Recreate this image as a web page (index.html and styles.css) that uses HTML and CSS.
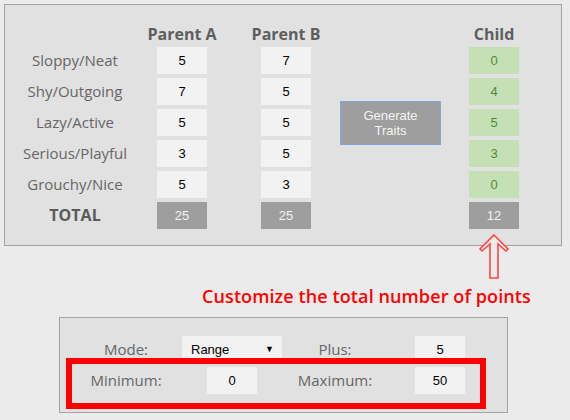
FILE: index.html
```html
<!DOCTYPE html>
<html lang="en">
<head>
    <meta charset="UTF-8">
    <meta name="viewport" content="width=device-width, initial-scale=1.0">
    <title>Trait Generator</title>
    <link rel="stylesheet" href="styles.css">
</head>
<body>
    <div class="page">
        <section class="traits">
            <div class="corner"></div>
            <div class="head col-a">Parent A</div>
            <div class="head col-b">Parent B</div>
            <div class="head col-c">Child</div>

            <div class="label">Sloppy/Neat</div>
            <div class="box col-a">5</div>
            <div class="box col-b">7</div>
            <div class="box child col-c">0</div>

            <div class="label">Shy/Outgoing</div>
            <div class="box col-a">7</div>
            <div class="box col-b">5</div>
            <div class="box child col-c">4</div>

            <div class="label">Lazy/Active</div>
            <div class="box col-a">5</div>
            <div class="box col-b">5</div>
            <div class="box child col-c">5</div>

            <div class="label">Serious/Playful</div>
            <div class="box col-a">3</div>
            <div class="box col-b">5</div>
            <div class="box child col-c">3</div>

            <div class="label">Grouchy/Nice</div>
            <div class="box col-a">5</div>
            <div class="box col-b">3</div>
            <div class="box child col-c">0</div>

            <div class="label total-label">TOTAL</div>
            <div class="box total col-a">25</div>
            <div class="box total col-b">25</div>
            <div class="box total col-c">12</div>

            <button class="generate">Generate<br>Traits</button>
        </section>

        <!-- arrow pointing at the child total -->
        <svg class="arrow" width="40" height="56" viewBox="475 230 40 56">
            <polygon points="494,235 508,249 506,251 498,244 498,278 490,278 490,244 482,251 480,249"
                     fill="#ebebeb" stroke="#ff4545" stroke-width="1.6" stroke-linejoin="miter"/>
        </svg>

        <p class="note">Customize the total number of points</p>

        <section class="settings">
            <div class="label">Mode:</div>
            <div class="select">Range <span class="caret">&#9660;</span></div>
            <div class="label">Plus:</div>
            <div class="box">5</div>

            <div class="label">Minimum:</div>
            <div class="box">0</div>
            <div class="label">Maximum:</div>
            <div class="box">50</div>

            <div class="highlight"></div>
        </section>
    </div>
</body>
</html>
```

FILE: styles.css
```css
body {
    margin: 0;
    background-color: #ebebeb;
    font-family: "Open Sans", "Liberation Sans", sans-serif;
    color: #666;
}
.page {
    position: relative;
    padding: 4px;
}
.traits {
    width: 556px;
    border: 1px solid #a3a3a3;
    background: #e1e1e1;
    padding: 20px 0 16px 0;
    display: grid;
    grid-template-columns: 152px 104px 79px 129px 50px;
    grid-template-rows: 18px repeat(6, 27px);
    row-gap: 4px;
}
.corner {
    grid-column: 1;
    grid-row: 1;
}
.head {
    grid-row: 1;
    width: 50px;
    display: flex;
    justify-content: center;
    white-space: nowrap;
    font-weight: bold;
    font-size: 16px;
    line-height: 18px;
    color: #5e5e5e;
}
.col-a { grid-column: 2; }
.col-b { grid-column: 3; }
.col-c { grid-column: 5; }
.label {
    grid-column: 1;
    width: 140px;
    text-align: center;
    font-size: 15px;
    line-height: 27px;
}
.total-label {
    font-weight: bold;
    font-size: 16px;
    color: #5a5a5a;
}
.box {
    width: 50px;
    height: 27px;
    line-height: 27px;
    background: #f2f2f2;
    color: #000;
    text-align: center;
    font-family: "Liberation Sans", Arial, sans-serif;
    font-size: 13px;
}
.box.child {
    background: #c6e0b5;
    color: #4f8a3b;
}
.box.total {
    background: #9e9e9e;
    color: #f2f2f2;
}
.generate {
    grid-column: 4;
    grid-row: 3 / 6;
    align-self: center;
    box-sizing: border-box;
    width: 101px;
    height: 44px;
    margin: 0;
    padding: 0;
    background: #9e9e9e;
    border: 1px solid #7ea6e2;
    border-radius: 0;
    color: #f4f4f4;
    font-family: "Liberation Sans", Arial, sans-serif;
    font-size: 13px;
    line-height: 15px;
}
.arrow {
    position: absolute;
    left: 475px;
    top: 230px;
}
.note {
    margin: 38px 0 8px 198px;
    color: #ff0000;
    font-size: 18px;
    font-weight: 600;
    line-height: 25px;
    letter-spacing: 0.1px;
}
.settings {
    position: relative;
    width: 427px;
    margin-left: 55px;
    border: 1px solid #a3a3a3;
    background: #e1e1e1;
    padding: 18px 0 18px 20px;
    display: grid;
    grid-template-columns: 92px 120px 86px 124px;
    grid-template-rows: 27px 27px;
    row-gap: 4px;
    justify-items: center;
}
.settings .label {
    grid-column: auto;
    width: auto;
    line-height: 27px;
}
.select {
    width: 100px;
    height: 27px;
    line-height: 27px;
    background: #f2f2f2;
    color: #000;
    font-family: "Liberation Sans", Arial, sans-serif;
    font-size: 13px;
    display: flex;
    justify-content: space-between;
    padding: 0 8px 0 9px;
    box-sizing: border-box;
}
.caret {
    font-size: 9px;
}
.highlight {
    position: absolute;
    left: 6px;
    top: 40px;
    width: 408px;
    height: 39px;
    border: 6px solid #ff0000;
}
```
